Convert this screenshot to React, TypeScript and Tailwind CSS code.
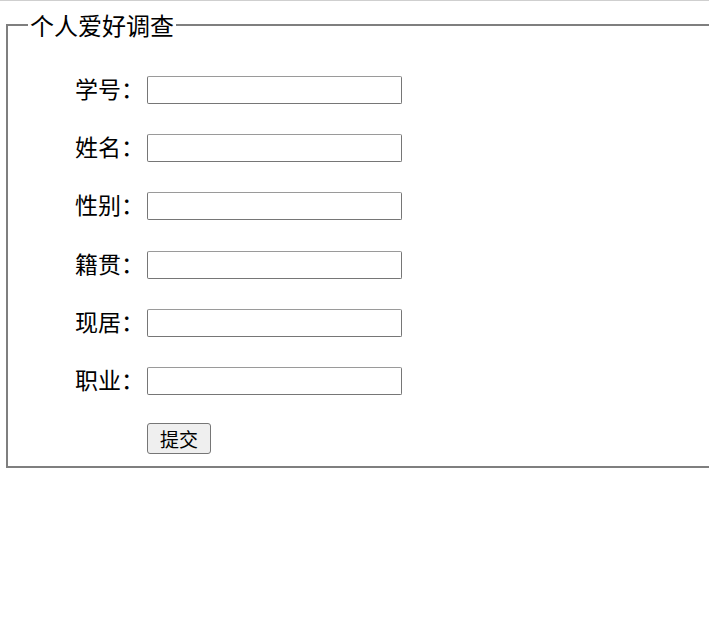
import React from "react";

const rows = ["学号：", "姓名：", "性别：", "籍贯：", "现居：", "职业："];

export default function App() {
  return (
    <div
      className="min-h-[640px] w-[709px] overflow-hidden bg-white text-black"
      style={{ fontFamily: '"Noto Sans CJK SC", "Noto Sans", sans-serif' }}
    >
      <div className="h-px bg-[#cfcfcf]" />
      <fieldset className="mt-[10px] ml-[6px] w-[740px] border-2 border-solid border-[#7f7f7f] pl-[20px] pr-[12px] pt-[0px] pb-[12px]">
        <legend className="px-[2px] text-[24px] leading-[28px]">个人爱好调查</legend>
        <div className="flex flex-col pt-[22px]">
          {rows.map((r) => (
            <div key={r} className="flex h-[58.2px] items-center">
              <label className="ml-[47px] w-[72px] -translate-y-[2px] text-[23px] leading-[28px]">{r}</label>
              <input
                type="text"
                className="h-[28px] w-[255px] rounded-[2px] border border-[#767676] border-t-[#9a9a9a] bg-white px-[2px] outline-none"
              />
            </div>
          ))}
          <div className="ml-[119px] mt-[13px] flex">
            <button
              type="button"
              className="h-[31px] w-[64px] rounded-[3px] border border-[#767676] bg-[#efefef] text-[19px] leading-[25px] text-black"
            >
              提交
            </button>
          </div>
        </div>
      </fieldset>
    </div>
  );
}
